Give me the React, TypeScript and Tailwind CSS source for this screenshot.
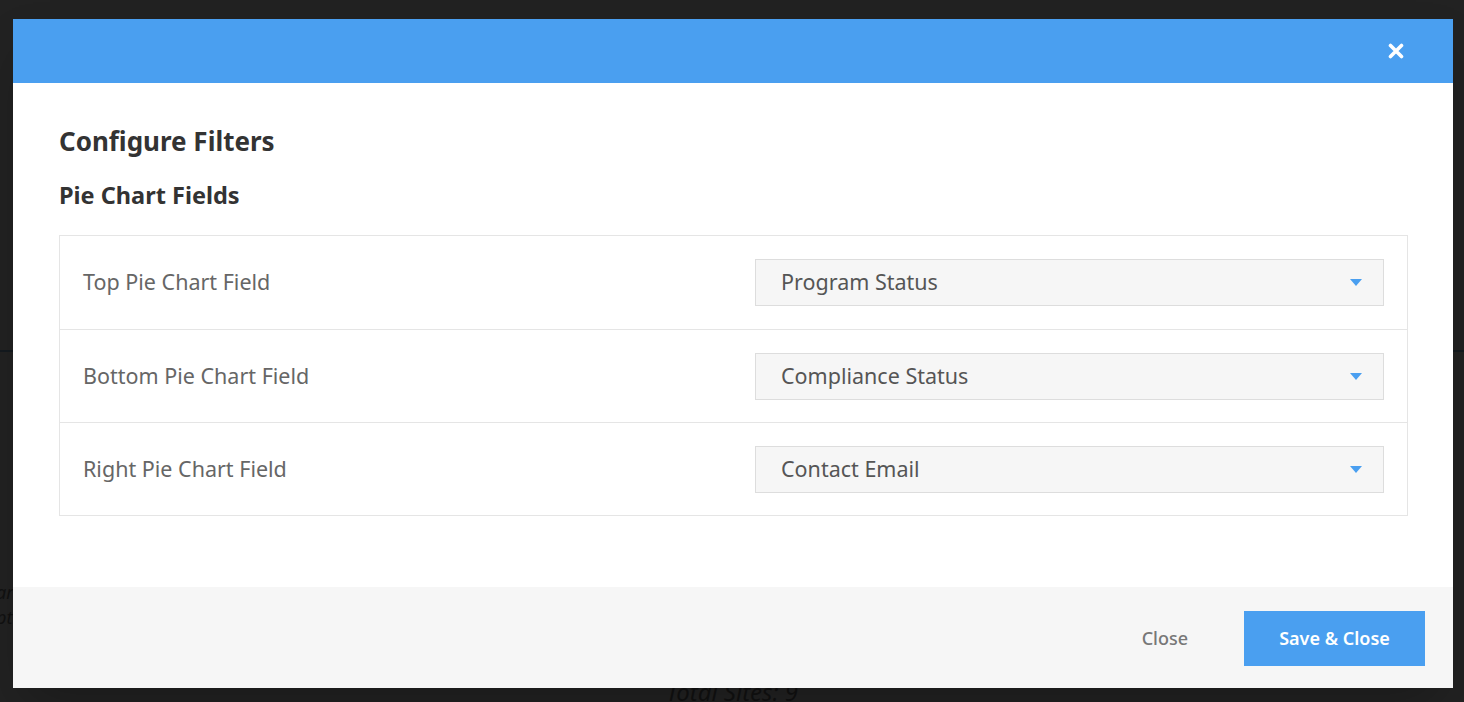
import { useState } from "react";

const fields = [
  { label: "Top Pie Chart Field", value: "Program Status" },
  { label: "Bottom Pie Chart Field", value: "Compliance Status" },
  { label: "Right Pie Chart Field", value: "Contact Email" },
];

function Caret() {
  return (
    <svg width="12" height="7" viewBox="0 0 12 7" className="shrink-0">
      <path d="M0 0h12L6 7z" fill="#4a9ff0" />
    </svg>
  );
}

export default function App() {
  const [values] = useState(fields);

  return (
    <div
      className="relative h-[702px] w-[1464px] overflow-hidden bg-[#222222]"
      style={{ fontFamily: "'Noto Sans', Roboto, sans-serif" }}
    >
      {/* dimmed page behind the modal */}
      <div className="h-[352px] border-b-2 border-[#141a1f]" />
      <div className="pt-[228px] text-[18px] italic leading-[25px] text-[#111]">
        <p className="-ml-[4px]">ar</p>
        <p className="-ml-[4px]">pt</p>
      </div>
      <p className="mt-[44px] text-center text-[24px] italic text-[#111]">Total Sites: 9</p>

      {/* modal */}
      <div className="absolute left-[13px] top-[19px] flex h-[669px] w-[1440px] flex-col bg-white shadow-2xl">
        <div className="flex h-[64px] items-center justify-end bg-[#4a9ff0] pr-[49px]">
          <button className="text-white">
            <svg width="16" height="16" viewBox="0 0 16 16">
              <path d="M2.5 2.5l11 11M13.5 2.5l-11 11" stroke="white" strokeWidth="3.6" strokeLinecap="round" />
            </svg>
          </button>
        </div>

        <div className="flex-1 pl-[46px] pr-[45px] pt-[40px]">
          <h1 className="text-[26px] font-bold leading-[36px] text-[#333]">Configure Filters</h1>
          <h2 className="mt-[20px] text-[23.5px] font-bold leading-[32px] text-[#333]">Pie Chart Fields</h2>

          <div className="mt-[24px] border border-[#e5e5e5]">
            {values.map((f, i) => (
              <div
                key={f.label}
                className={`flex h-[93px] items-center justify-between pl-[23px] pr-[23px] ${
                  i > 0 ? "border-t border-[#e5e5e5]" : ""
                }`}
              >
                <span className="text-[21.5px] text-[#666]">{f.label}</span>
                <div className="flex h-[47px] w-[629px] items-center justify-between border border-[#dddddd] bg-[#f6f6f6] pl-[25px] pr-[21px]">
                  <span className="text-[21.5px] text-[#555]">{f.value}</span>
                  <Caret />
                </div>
              </div>
            ))}
          </div>
        </div>

        <div className="flex h-[101px] items-center justify-end gap-[56px] bg-[#f6f6f6] pr-[28px] pt-[2px]">
          <button className="text-[18px] font-medium text-[#777]">Close</button>
          <button className="h-[55px] w-[181px] bg-[#4a9ff0] text-[18px] font-semibold text-white">
            Save &amp; Close
          </button>
        </div>
      </div>
    </div>
  );
}
